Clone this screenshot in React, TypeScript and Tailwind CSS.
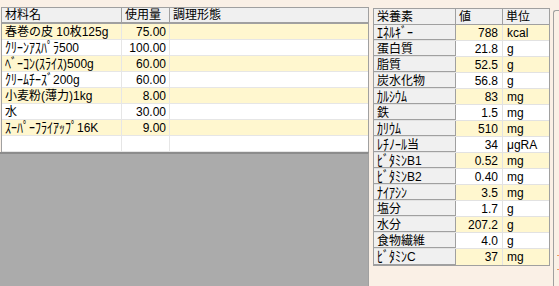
import { Fragment } from "react";

const ingredients = [
  { name: "春巻の皮 10枚125g", qty: "75.00" },
  { name: "ｸﾘｰﾝｱｽﾊﾟﾗ500", qty: "100.00" },
  { name: "ﾍﾞｰｺﾝ(ｽﾗｲｽ)500g", qty: "60.00" },
  { name: "ｸﾘｰﾑﾁｰｽﾞ200g", qty: "60.00" },
  { name: "小麦粉(薄力)1kg", qty: "8.00" },
  { name: "水", qty: "30.00" },
  { name: "ｽｰﾊﾟｰﾌﾗｲｱｯﾌﾟ16K", qty: "9.00" },
  { name: "", qty: "" },
];

const nutrients = [
  { name: "ｴﾈﾙｷﾞｰ", value: "788", unit: "kcal" },
  { name: "蛋白質", value: "21.8", unit: "g" },
  { name: "脂質", value: "52.5", unit: "g" },
  { name: "炭水化物", value: "56.8", unit: "g" },
  { name: "ｶﾙｼｳﾑ", value: "83", unit: "mg" },
  { name: "鉄", value: "1.5", unit: "mg" },
  { name: "ｶﾘｳﾑ", value: "510", unit: "mg" },
  { name: "ﾚﾁﾉｰﾙ当", value: "34", unit: "μgRA" },
  { name: "ﾋﾞﾀﾐﾝB1", value: "0.52", unit: "mg" },
  { name: "ﾋﾞﾀﾐﾝB2", value: "0.40", unit: "mg" },
  { name: "ﾅｲｱｼﾝ", value: "3.5", unit: "mg" },
  { name: "塩分", value: "1.7", unit: "g" },
  { name: "水分", value: "207.2", unit: "g" },
  { name: "食物繊維", value: "4.0", unit: "g" },
  { name: "ﾋﾞﾀﾐﾝC", value: "37", unit: "mg" },
];

const font = { fontFamily: '"Liberation Sans", "Noto Sans CJK JP", sans-serif' };

// half-width kana in Noto render short, stretch them a bit like the old bitmap font
function Kana({ text }: { text: string }) {
  const parts = text.split(/([\uff61-\uff9f]+)/);
  return (
    <>
      {parts.map((p, i) =>
        /[\uff61-\uff9f]/.test(p) ? (
          <span key={i} className="inline-block scale-y-[1.2]">
            {p}
          </span>
        ) : (
          <Fragment key={i}>{p}</Fragment>
        )
      )}
    </>
  );
}

export default function App() {
  return (
    <div
      className="w-[559px] h-[286px] bg-[#faf0e6] flex text-black text-[12px] leading-[14px] overflow-hidden"
      style={font}
    >
      {/* left: ingredients grid */}
      <div className="w-[369px] pt-[7px] flex flex-col">
        <div className="bg-white border-l border-[#a0a0a0] border-r ml-[1px]">
          <div className="grid grid-cols-[120px_48px_1fr] h-[17px] bg-[#f0f0f0] border-t border-b-2 border-[#a0a0a0]">
            <div className="pl-[3px] border-r border-[#a0a0a0] flex items-center">材料名</div>
            <div className="pl-[3px] border-r border-[#a0a0a0] flex items-center">使用量</div>
            <div className="pl-[3px] flex items-center">調理形態</div>
          </div>
          {ingredients.map((r, i) => (
            <div
              key={i}
              className={`grid grid-cols-[120px_48px_1fr] h-[16px] border-b border-[#e6e6e6] ${
                i % 2 === 0 ? "bg-[#fff7cf]" : "bg-white"
              }`}
            >
              <div className="pl-[3px] border-r border-[#e6e6e6] flex items-center whitespace-nowrap overflow-hidden">
                <span>
                  <Kana text={r.name} />
                </span>
              </div>
              <div className="pr-[3px] border-r border-[#e6e6e6] flex items-center justify-end">{r.qty}</div>
              <div />
            </div>
          ))}
        </div>
        <div className="flex-1 bg-[#ababab] border-t-2 border-r border-[#a0a0a0] border-t-[#8c8c8c]" />
      </div>

      {/* right: nutrients grid */}
      <div className="flex-1 pt-[8px] pl-[4px] pr-[3px]">
        <div className="border border-[#a0a0a0] bg-white">
          <div className="grid grid-cols-[82px_47px_1fr] h-[16px] bg-[#f0f0f0] border-b border-[#a0a0a0]">
            <div className="pl-[3px] border-r border-[#a0a0a0] flex items-center">栄養素</div>
            <div className="pl-[3px] border-r border-[#a0a0a0] flex items-center">値</div>
            <div className="pl-[3px] flex items-center">単位</div>
          </div>
          {nutrients.map((r, i) => (
            <div
              key={r.name}
              className={`grid grid-cols-[82px_47px_1fr] h-[16px] ${
                i < nutrients.length - 1 ? "border-b border-[#e2e2e2]" : ""
              } ${i % 2 === 0 ? "bg-[#fff7cf]" : "bg-white"}`}
            >
              <div className="pl-[3px] bg-[#f0f0f0] border-r border-[#a0a0a0] shadow-[inset_0_-1px_0_#a0a0a0] flex items-center whitespace-nowrap">
                <span>
                  <Kana text={r.name} />
                </span>
              </div>
              <div className="pr-[4px] border-r border-[#e2e2e2] flex items-center justify-end">{r.value}</div>
              <div className="pl-[4px] flex items-center">{r.unit}</div>
            </div>
          ))}
        </div>
      </div>

      {/* edge of neighbouring panel */}
      <div className="w-[6px] mt-[10px] border-l border-t border-[#a0a0a0] rounded-tl-[3px] flex flex-col">
        <div className="flex-1" />
        <div className="ml-[3px] h-px bg-[#f0a060] mb-[13px]" />
        <div className="ml-[3px] h-px bg-[#f0a060] mb-[16px]" />
      </div>
    </div>
  );
}
